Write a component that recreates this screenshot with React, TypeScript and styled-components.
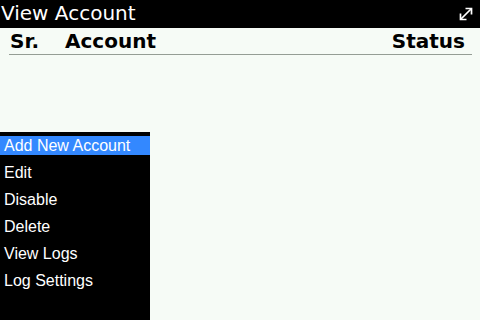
import React from "react";
import styled, { createGlobalStyle } from "styled-components";

const GlobalStyle = createGlobalStyle`
  html, body {
    margin: 0;
    padding: 0;
    background: #f6fbf6;
  }
`;

const Screen = styled.div`
  position: relative;
  width: 480px;
  height: 320px;
  overflow: hidden;
  background: #f6fbf6;
  display: flex;
  flex-direction: column;
  font-family: "DejaVu Sans", sans-serif;
`;

const TitleBar = styled.div`
  height: 28px;
  background: #000;
  color: #fff;
  display: flex;
  align-items: center;
  justify-content: space-between;
  padding: 0 7px 0 1px;
  font-size: 20px;
  line-height: 28px;
`;

const TitleText = styled.span`
  margin-top: -3px;
`;

const HeaderRow = styled.div`
  margin: 0 8px 0 9px;
  height: 26px;
  display: flex;
  align-items: center;
  border-bottom: 1px solid #959d95;
  font-weight: bold;
  font-size: 20px;
  color: #000;
`;

const HeaderCell = styled.span<{ $width?: number; $grow?: boolean }>`
  width: ${(p) => (p.$width ? `${p.$width}px` : "auto")};
  flex: ${(p) => (p.$grow ? 1 : "none")};
  padding-left: ${(p) => (p.$width ? "1px" : "0")};
  text-align: ${(p) => (p.$grow ? "right" : "left")};
  padding-right: ${(p) => (p.$grow ? "7px" : "0")};
`;

const Menu = styled.ul`
  position: absolute;
  left: 0;
  top: 132px;
  bottom: 0;
  width: 150px;
  margin: 0;
  padding: 4px 0 0;
  list-style: none;
  background: #000;
  display: flex;
  flex-direction: column;
  gap: 8px;
  font-family: "Liberation Sans", Arial, sans-serif;
  font-size: 16px;
`;

const MenuItem = styled.li<{ $active?: boolean }>`
  height: 19px;
  line-height: 19px;
  padding-left: 4px;
  color: #fff;
  background: ${(p) => (p.$active ? "#3388ff" : "transparent")};
`;

const ExpandIcon = () => (
  <svg width="14" height="14" viewBox="0 0 14 14" fill="none" stroke="#fff" strokeWidth="1.7">
    <path d="M1.5 12.5 L12.5 1.5" />
    <path d="M6.5 1.5 H12.5 V7.5" />
    <path d="M1.5 6.5 V12.5 H7.5" />
  </svg>
);

const items = ["Add New Account", "Edit", "Disable", "Delete", "View Logs", "Log Settings"];

export default function App() {
  return (
    <>
      <GlobalStyle />
      <Screen>
        <TitleBar>
          <TitleText>View Account</TitleText>
          <ExpandIcon />
        </TitleBar>
        <HeaderRow>
          <HeaderCell $width={55}>Sr.</HeaderCell>
          <HeaderCell>Account</HeaderCell>
          <HeaderCell $grow>Status</HeaderCell>
        </HeaderRow>
        <Menu>
          {items.map((label, i) => (
            <MenuItem key={label} $active={i === 0}>
              {label}
            </MenuItem>
          ))}
        </Menu>
      </Screen>
    </>
  );
}
